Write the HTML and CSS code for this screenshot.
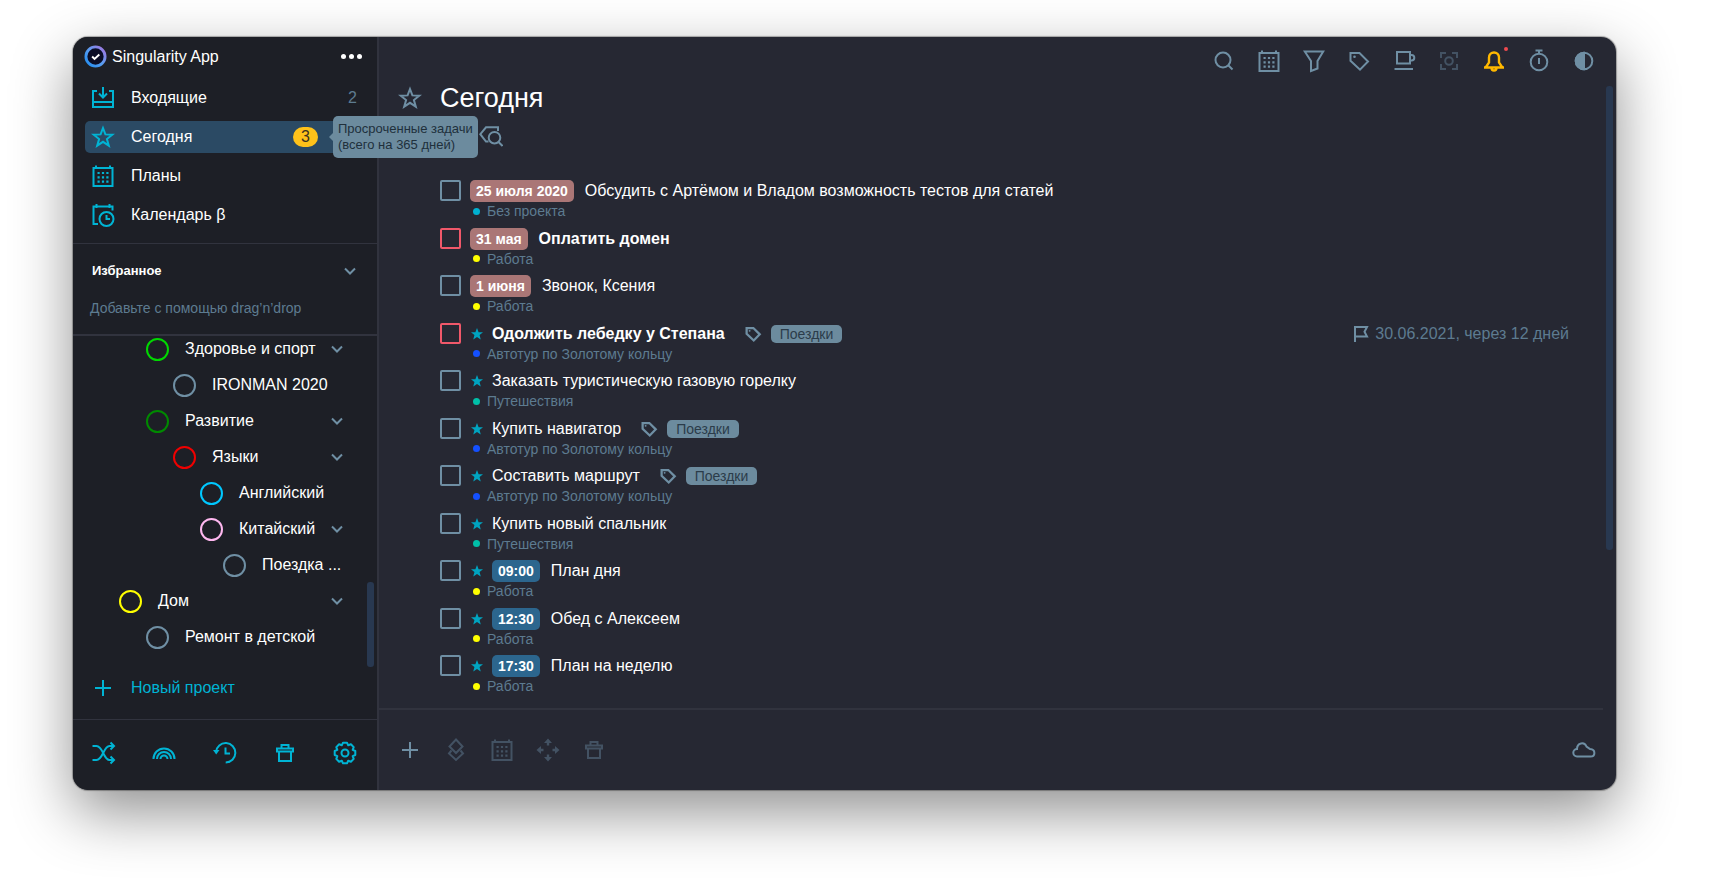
FILE: index.html
```html
<!DOCTYPE html>
<html lang="ru">
<head>
<meta charset="utf-8">
<meta name="viewport" content="width=device-width, initial-scale=1">
<title>Singularity App</title>
<link rel="stylesheet" href="styles.css">
</head>
<body>
<svg class="sprite" aria-hidden="true">
  <defs>
    <linearGradient id="ring" x1="0" y1="1" x2="1" y2="0"><stop offset="0" stop-color="#1d8cf0"/><stop offset=".5" stop-color="#5a9cf0"/><stop offset="1" stop-color="#a874e0"/></linearGradient>
  </defs>
  <symbol id="star" viewBox="0 0 24 24"><path d="M12 3l2.400 6.400 6.900.3-5.400 4.300 1.900 6.600L12 16.800l-5.800 3.800L8.100 14 2.700 9.700l6.900-.3z"/></symbol>
  <symbol id="star-solid" viewBox="0 0 24 24"><path fill="currentColor" stroke="none" d="M12 0l3.200 8.300 8.800.4-6.900 5.500 2.400 8.600L12 17.900l-7.500 4.900 2.400-8.600L0 8.700l8.800-.4z"/></symbol>
  <symbol id="calendar" viewBox="0 0 24 24"><path d="M2.500 4h19v18h-19zM5 1.500V5M19 1.500V5"/><path stroke-width="2.200" stroke-dasharray="2.200 2.200" d="M6.500 9h11M6.500 13.300h11M6.500 17.600h11"/></symbol>
  <symbol id="inbox" viewBox="0 0 24 24"><path d="M6 5H2v16h20V5h-4M2 16h20M12 1v10M8 7.500l4 4 4-4"/></symbol>
  <symbol id="calendar-clock" viewBox="0 0 24 24"><path d="M7 21H2.500V3.500h19v4M5.500 1v4M18.500 1v4"/><circle cx="15.500" cy="16" r="7"/><path d="M15.500 12v4H19"/></symbol>
  <symbol id="chevron" viewBox="0 0 12 8"><path d="M1 1.500l5 5 5-5"/></symbol>
  <symbol id="plus" viewBox="0 0 24 24"><path d="M12 4v16M4 12h16"/></symbol>
  <symbol id="shuffle" viewBox="0 0 24 24"><path d="M.5 5h4c6.500 0 7 14 13 14H22M.5 19h4c6.500 0 7-14 13-14H22M18.500 1.500L22 5l-3.500 3.500M18.500 15.500L22 19l-3.500 3.500"/></symbol>
  <symbol id="rainbow" viewBox="0 0 24 24"><path d="M1.500 18a10.500 10.500 0 0 1 21 0M5 18a7 7 0 0 1 14 0M8.500 18a3.500 3.500 0 0 1 7 0"/></symbol>
  <symbol id="history" viewBox="0 0 24 24"><path d="M3 11a9.700 9.700 0 1 1 9.700 10.500"/><path fill="currentColor" stroke="none" d="M0 9h6.500L3.200 13.500z"/><path d="M12.500 6.500v6H17"/></symbol>
  <symbol id="trash" viewBox="0 0 24 24"><path d="M4 7.500h16v3H4zM6 10.500V20h12v-9.500M8.500 7.500V4h7v3.500"/></symbol>
  <symbol id="gear" viewBox="0 0 24 24"><circle cx="12" cy="12" r="3.500"/><path stroke-linejoin="round" d="M10 1.700L14 1.700 15.200 4.300 17.900 3.300 20.700 6.100 19.700 8.800 22.300 10 22.300 14 19.700 15.200 20.700 17.900 17.900 20.700 15.200 19.700 14 22.300 10 22.300 8.800 19.700 6.100 20.700 3.300 17.900 4.300 15.200 1.700 14 1.700 10 4.300 8.800 3.300 6.100 6.100 3.300 8.800 4.300z"/></symbol>
  <symbol id="search" viewBox="0 0 24 24"><circle cx="11" cy="11" r="7.500"/><path d="M16 16l4.500 4.500"/></symbol>
  <symbol id="funnel" viewBox="0 0 24 24"><path d="M2.800 2.500h18.400l-5.700 9.500v7.500L9 22v-10z"/></symbol>
  <symbol id="tag" viewBox="0 0 24 24"><path d="M3.500 4h9l8.500 8.500-8 8.200-9.500-9z"/><circle cx="7.500" cy="7.800" r="1.300" fill="currentColor" stroke="none"/></symbol>
  <symbol id="cup" viewBox="0 0 24 24"><path d="M5 3h13v11.500H5zM18 6h1.500a2.800 2.800 0 0 1 0 5.600H18M2.500 20h18.500"/></symbol>
  <symbol id="focus" viewBox="0 0 24 24"><path d="M4 9V4h5M15 4h5v5M20 15v5h-5M9 20H4v-5"/><circle cx="12" cy="12" r="3.800"/></symbol>
  <symbol id="bell" viewBox="0 0 24 24"><path stroke-width="2.400" d="M2 18.500h20M4 18l3-4.500V8.500a5 5 0 0 1 10 0v5l3 4.500M9.500 19a2.500 2.500 0 0 0 5 0"/></symbol>
  <symbol id="timer" viewBox="0 0 24 24"><circle cx="12" cy="13" r="8.300"/><path d="M12 9v6M12 1v3M8.500 1.500h7"/></symbol>
  <symbol id="contrast" viewBox="0 0 24 24"><circle cx="12" cy="12" r="8.300"/><path fill="currentColor" d="M12 3.700a8.300 8.300 0 0 0 0 16.600z"/></symbol>
  <symbol id="tag-search" viewBox="0 0 24 24"><path d="M9.500 16.500H7L1.300 9.200 7 2.300h12V6"/><circle cx="15.500" cy="12.700" r="5.800"/><path d="M19.500 17l4 4"/></symbol>
  <symbol id="flag" viewBox="0 0 16 16"><path d="M2 16V1h12l-2.500 4.700L14 10.500H2"/></symbol>
  <symbol id="priority" viewBox="0 0 24 24"><path d="M12 1.500l6.500 7-6.500 6.500-6.500-6.500zM7.500 12.500L5 15.500l7 6.500 7-6.500-2.500-3"/></symbol>
  <symbol id="move" viewBox="0 0 24 24"><path fill="currentColor" stroke="none" d="M12 .5l4 4.500h-2.800v2.500h-2.400V5H8zM12 23.500L8 19h2.800v-2.500h2.400V19H16zM.5 12L5 8v2.800h2.500v2.400H5V16zM23.500 12L19 16v-2.800h-2.500v-2.400H19V8z"/></symbol>
  <symbol id="cloud" viewBox="0 0 24 24"><path d="M5 18.500a3.700 3.700 0 0 1 0-7.400C5 4.500 12.500 3.500 14.500 8.500l3.500 2.600c6 .4 5.500 7.400.5 7.400z"/></symbol>
</svg>

<div class="window">
  <aside class="sidebar">
    <header class="brand">
      <svg class="logo" viewBox="0 0 24 24" aria-hidden="true"><circle cx="12" cy="12" r="10" fill="#0b0d26" stroke="url(#ring)" stroke-width="3"/><path d="M8.500 12l2.500 2.500 5-4.500" fill="none" stroke="#fff" stroke-width="2"/></svg>
      <span class="brand-name">Singularity App</span>
      <button class="more" aria-label="Меню"><i></i><i></i><i></i></button>
    </header>

    <nav class="nav">
      <a class="nav-item" href="#inbox"><svg class="icon"><use href="#inbox"/></svg>Входящие<span class="count">2</span></a>
      <a class="nav-item active" href="#today"><svg class="icon"><use href="#star"/></svg>Сегодня<span class="badge">3</span>
        <span class="tooltip" role="tooltip">Просроченные задачи<br>(всего на 365 дней)</span></a>
      <a class="nav-item" href="#plans"><svg class="icon"><use href="#calendar"/></svg>Планы</a>
      <a class="nav-item" href="#calendar"><svg class="icon"><use href="#calendar-clock"/></svg>Календарь β</a>
    </nav>

    <section class="favorites">
      <button class="favorites-head">Избранное<svg class="chevron"><use href="#chevron"/></svg></button>
      <p class="hint">Добавьте с помощью drag’n’drop</p>
    </section>

    <div class="tree-wrap">
      <ul class="tree">
        <li class="level-2"><i class="ring lime"></i><a href="#p1">Здоровье и спорт</a><svg class="chevron"><use href="#chevron"/></svg></li>
        <li class="level-3"><i class="ring"></i><a href="#p2">IRONMAN 2020</a></li>
        <li class="level-2"><i class="ring green"></i><a href="#p3">Развитие</a><svg class="chevron"><use href="#chevron"/></svg></li>
        <li class="level-3"><i class="ring red"></i><a href="#p4">Языки</a><svg class="chevron"><use href="#chevron"/></svg></li>
        <li class="level-4"><i class="ring sky"></i><a href="#p5">Английский</a></li>
        <li class="level-4"><i class="ring pink"></i><a href="#p6">Китайский</a><svg class="chevron"><use href="#chevron"/></svg></li>
        <li class="level-5"><i class="ring"></i><a href="#p7">Поездка ...</a></li>
        <li class="level-1"><i class="ring yellow"></i><a href="#p8">Дом</a><svg class="chevron"><use href="#chevron"/></svg></li>
        <li class="level-2"><i class="ring"></i><a href="#p9">Ремонт в детской</a></li>
      </ul>
      <div class="thumb tree-thumb"></div>
    </div>

    <button class="new-project"><svg class="icon"><use href="#plus"/></svg>Новый проект</button>

    <footer class="side-tools">
      <button aria-label="Перемешать"><svg class="icon"><use href="#shuffle"/></svg></button>
      <button aria-label="Радуга"><svg class="icon"><use href="#rainbow"/></svg></button>
      <button aria-label="История"><svg class="icon"><use href="#history"/></svg></button>
      <button aria-label="Корзина"><svg class="icon"><use href="#trash"/></svg></button>
      <button aria-label="Настройки"><svg class="icon"><use href="#gear"/></svg></button>
    </footer>
  </aside>

  <main class="main">
    <div class="toolbar">
      <button aria-label="Поиск"><svg class="icon"><use href="#search"/></svg></button>
      <button aria-label="Дата"><svg class="icon"><use href="#calendar"/></svg></button>
      <button aria-label="Фильтр"><svg class="icon"><use href="#funnel"/></svg></button>
      <button aria-label="Теги"><svg class="icon"><use href="#tag"/></svg></button>
      <button aria-label="Перерыв"><svg class="icon"><use href="#cup"/></svg></button>
      <button class="dim" aria-label="Фокус"><svg class="icon"><use href="#focus"/></svg></button>
      <button class="alert" aria-label="Уведомления"><svg class="icon"><use href="#bell"/></svg></button>
      <button aria-label="Таймер"><svg class="icon"><use href="#timer"/></svg></button>
      <button aria-label="Тема"><svg class="icon"><use href="#contrast"/></svg></button>
    </div>

    <div class="heading"><svg class="icon"><use href="#star"/></svg><h1>Сегодня</h1></div>
    <div class="filters"><button aria-label="Поиск по тегам"><svg class="icon"><use href="#tag-search"/></svg></button></div>

    <ul class="tasks">
      <li class="task"><input type="checkbox" id="t1"><div class="body">
        <div class="line"><span class="chip late">25 июля 2020</span><label for="t1">Обсудить с Артёмом и Владом возможность тестов для статей</label></div>
        <div class="project cyan">Без проекта</div></div></li>
      <li class="task urgent"><input type="checkbox" id="t2"><div class="body">
        <div class="line"><span class="chip late">31 мая</span><label for="t2">Оплатить домен</label></div>
        <div class="project yellow">Работа</div></div></li>
      <li class="task"><input type="checkbox" id="t3"><div class="body">
        <div class="line"><span class="chip late">1 июня</span><label for="t3">Звонок, Ксения</label></div>
        <div class="project yellow">Работа</div></div></li>
      <li class="task urgent"><input type="checkbox" id="t4"><div class="body">
        <div class="line"><svg class="mark"><use href="#star-solid"/></svg><label for="t4">Одолжить лебедку у Степана</label><svg class="tag-icon"><use href="#tag"/></svg><span class="tag">Поездки</span><span class="deadline"><svg class="flag"><use href="#flag"/></svg>30.06.2021, через 12 дней</span></div>
        <div class="project blue">Автотур по Золотому кольцу</div></div></li>
      <li class="task"><input type="checkbox" id="t5"><div class="body">
        <div class="line"><svg class="mark"><use href="#star-solid"/></svg><label for="t5">Заказать туристическую газовую горелку</label></div>
        <div class="project teal">Путешествия</div></div></li>
      <li class="task"><input type="checkbox" id="t6"><div class="body">
        <div class="line"><svg class="mark"><use href="#star-solid"/></svg><label for="t6">Купить навигатор</label><svg class="tag-icon"><use href="#tag"/></svg><span class="tag">Поездки</span></div>
        <div class="project blue">Автотур по Золотому кольцу</div></div></li>
      <li class="task"><input type="checkbox" id="t7"><div class="body">
        <div class="line"><svg class="mark"><use href="#star-solid"/></svg><label for="t7">Составить маршрут</label><svg class="tag-icon"><use href="#tag"/></svg><span class="tag">Поездки</span></div>
        <div class="project blue">Автотур по Золотому кольцу</div></div></li>
      <li class="task"><input type="checkbox" id="t8"><div class="body">
        <div class="line"><svg class="mark"><use href="#star-solid"/></svg><label for="t8">Купить новый спальник</label></div>
        <div class="project teal">Путешествия</div></div></li>
      <li class="task"><input type="checkbox" id="t9"><div class="body">
        <div class="line"><svg class="mark"><use href="#star-solid"/></svg><span class="chip time">09:00</span><label for="t9">План дня</label></div>
        <div class="project yellow">Работа</div></div></li>
      <li class="task"><input type="checkbox" id="t10"><div class="body">
        <div class="line"><svg class="mark"><use href="#star-solid"/></svg><span class="chip time">12:30</span><label for="t10">Обед с Алексеем</label></div>
        <div class="project yellow">Работа</div></div></li>
      <li class="task"><input type="checkbox" id="t11"><div class="body">
        <div class="line"><svg class="mark"><use href="#star-solid"/></svg><span class="chip time">17:30</span><label for="t11">План на неделю</label></div>
        <div class="project yellow">Работа</div></div></li>
    </ul>
    <div class="thumb main-thumb"></div>

    <footer class="actions">
      <button aria-label="Добавить"><svg class="icon"><use href="#plus"/></svg></button>
      <button class="dim" aria-label="Приоритет"><svg class="icon"><use href="#priority"/></svg></button>
      <button class="dim" aria-label="Дата"><svg class="icon"><use href="#calendar"/></svg></button>
      <button class="dim" aria-label="Переместить"><svg class="icon"><use href="#move"/></svg></button>
      <button class="dim" aria-label="Удалить"><svg class="icon"><use href="#trash"/></svg></button>
      <button class="sync" aria-label="Синхронизация"><svg class="icon"><use href="#cloud"/></svg></button>
    </footer>
  </main>
</div>
</body>
</html>
```

FILE: styles.css
```css
:root {
  --side: #1d1f26;
  --main: #262833;
  --line: #31333e;
  --cyan: #00b4d4;
  --muted: #6f8fa4;
  --muted-text: #5d7b90;
  --dim: #435263;
  --thumb: #283850;
}

* { box-sizing: border-box; }

body {
  margin: 0;
  min-height: 100vh;
  padding: 37px 98px 102px 73px;
  display: flex;
  background: #fff;
  color: #fff;
  font: 16px/20px "Liberation Sans", Arial, sans-serif;
}

button {
  padding: 0;
  border: 0;
  background: none;
  color: inherit;
  font: inherit;
  display: flex;
  align-items: center;
  cursor: pointer;
}

a { color: inherit; text-decoration: none; }
ul { margin: 0; padding: 0; list-style: none; }
h1, p { margin: 0; }
svg { flex: none; fill: none; stroke: currentColor; stroke-width: 2; }

.sprite { position: absolute; width: 0; height: 0; }
.icon { width: 24px; height: 24px; }
.chevron { width: 12px; height: 8px; color: var(--muted); }

.window {
  flex: 1;
  display: flex;
  overflow: hidden;
  border-radius: 15px;
  background: var(--main);
  box-shadow: 0 0 1px 1px rgba(0, 0, 0, .3), 0 22px 60px rgba(0, 0, 0, .44);
}

/* Sidebar */
.sidebar {
  flex: none;
  width: 306px;
  display: flex;
  flex-direction: column;
  background: var(--side);
  border-right: 2px solid var(--line);
}

.brand {
  display: flex;
  align-items: center;
  gap: 5px;
  height: 39px;
  padding: 0 15px 0 11px;
}
.logo { width: 23px; height: 23px; }
.more { margin-left: auto; gap: 3px; }
.more i { width: 5px; height: 5px; border-radius: 50%; background: #fff; }

.nav {
  display: flex;
  flex-direction: column;
  gap: 7px;
  padding: 6px 13px 12px 12px;
  border-bottom: 1px solid var(--line);
}
.nav-item {
  position: relative;
  display: flex;
  align-items: center;
  height: 32px;
  padding: 0 7px 0 6px;
  border-radius: 5px;
}
.nav-item .icon { margin-right: 16px; color: var(--cyan); }
.active { background: #2b4a64; }
.count { margin-left: auto; color: var(--muted-text); }
.badge {
  margin: 0 39px 0 auto;
  width: 25px;
  border-radius: 11px;
  background: #ffc21a;
  color: #3a3220;
  text-align: center;
}
.tooltip {
  position: absolute;
  z-index: 2;
  left: 248px;
  top: -5px;
  padding: 5px;
  border-radius: 5px;
  background: #6c8b9e;
  color: #20303c;
  font-size: 13px;
  line-height: 16px;
  white-space: nowrap;
}
.tooltip::before {
  content: "";
  position: absolute;
  left: -4px;
  top: 17px;
  border: 4px solid transparent;
  border-left: 0;
  border-right-color: #6c8b9e;
}

.favorites { padding: 16px 21px 16px 17px; border-bottom: 2px solid var(--line); }
.favorites-head {
  width: 100%;
  height: 22px;
  padding-left: 2px;
  justify-content: space-between;
  font-size: 13px;
  font-weight: bold;
}
.hint { margin-top: 16px; color: var(--muted-text); font-size: 14px; }

.tree-wrap { position: relative; flex: 1; min-height: 0; overflow: hidden; }
.tree { margin-top: -5px; }
.tree li {
  display: flex;
  align-items: center;
  height: 36px;
  padding-right: 34px;
}
.tree .chevron { margin-left: auto; }
.tree .level-1 { padding-left: 46px; }
.tree .level-2 { padding-left: 73px; }
.tree .level-3 { padding-left: 100px; }
.tree .level-4 { padding-left: 127px; }
.tree .level-5 { padding-left: 150px; }
.ring {
  flex: none;
  width: 23px;
  height: 23px;
  margin-right: 16px;
  border: 2px solid var(--muted);
  border-radius: 50%;
}
.ring.lime { border-color: #00d800; }
.ring.green { border-color: #008a00; }
.ring.red { border-color: #f00000; }
.ring.sky { border-color: #00c8ff; }
.ring.pink { border-color: #ffb8f0; }
.ring.yellow { border-color: #ffff00; }

.thumb { position: absolute; width: 7px; border-radius: 3px; background: var(--thumb); }
.tree-thumb { right: 3px; bottom: 1px; height: 85px; }

.new-project {
  height: 52px;
  padding: 0 18px 12px;
  gap: 16px;
  color: var(--cyan);
  border-bottom: 1px solid var(--line);
}
.side-tools {
  display: flex;
  justify-content: space-between;
  padding: 21px 20px 25px 19px;
  color: var(--cyan);
}

/* Main pane */
.main {
  position: relative;
  flex: 1;
  min-width: 0;
  display: flex;
  flex-direction: column;
}
.toolbar {
  display: flex;
  justify-content: flex-end;
  gap: 21px;
  padding: 12px 20px 10px;
  color: var(--muted);
}
.dim { color: var(--dim); }
.alert { position: relative; color: #ffb800; }
.alert::after {
  content: "";
  position: absolute;
  right: -2px;
  top: -2px;
  width: 4px;
  height: 4px;
  border-radius: 50%;
  background: #f04a50;
}

.heading { display: flex; align-items: center; gap: 18px; height: 30px; padding-left: 19px; }
.heading .icon { color: var(--muted); }
.heading h1 { font-size: 27px; line-height: 30px; font-weight: normal; }
.filters { padding: 12px 0 0 100px; color: var(--muted); }

.tasks {
  flex: 1;
  display: flex;
  flex-direction: column;
  padding: 30px 47px 6px 61px;
}
.task { flex: 1 0 auto; display: flex; gap: 9px; }
.task input {
  appearance: none;
  flex: none;
  width: 21px;
  height: 21px;
  margin: 1px 0 0;
  border: 2px solid var(--muted);
  border-radius: 2px;
}
.urgent input { border-color: #f0586a; }
.urgent label { font-weight: bold; }
.body { flex: 1; min-width: 0; }
.line { display: flex; align-items: center; height: 24px; }
.mark { width: 12px; height: 12px; margin: 0 10px 0 1px; color: #00a4c0; }
.mark + label, .mark + .chip { margin-left: -1px; }
.chip {
  padding: 1px 6px;
  margin-right: 11px;
  border-radius: 5px;
  font-size: 14px;
  font-weight: bold;
}
.late { background: #aa7676; }
.time { background: #2c668e; }
.tag-icon { width: 18px; height: 18px; margin: 0 9px 0 19px; color: var(--muted); stroke-width: 3; }
.tag {
  padding: 0 9px;
  border-radius: 5px;
  background: #6c8b9e;
  color: #2b3c4a;
  font-size: 14px;
  line-height: 18px;
}
.deadline { display: flex; align-items: center; gap: 6px; margin-left: auto; color: var(--muted-text); }
.flag { width: 16px; height: 16px; color: var(--muted); }

.project {
  display: flex;
  align-items: center;
  gap: 7px;
  padding-left: 3px;
  color: var(--muted-text);
  font-size: 14px;
  line-height: 16px;
}
.project::before { content: ""; width: 7px; height: 7px; border-radius: 50%; background: var(--dot); }
.project.cyan { --dot: #00b0d0; }
.project.yellow { --dot: #ffff00; }
.project.blue { --dot: #1450ff; }
.project.teal { --dot: #00bfa8; }

.main-thumb { right: 3px; top: 49px; height: 464px; }

.actions {
  display: flex;
  align-items: center;
  gap: 22px;
  height: 82px;
  margin-right: 13px;
  padding: 0 7px 0 19px;
  border-top: 2px solid var(--line);
  color: var(--muted);
}
.sync { margin-left: auto; }
```
